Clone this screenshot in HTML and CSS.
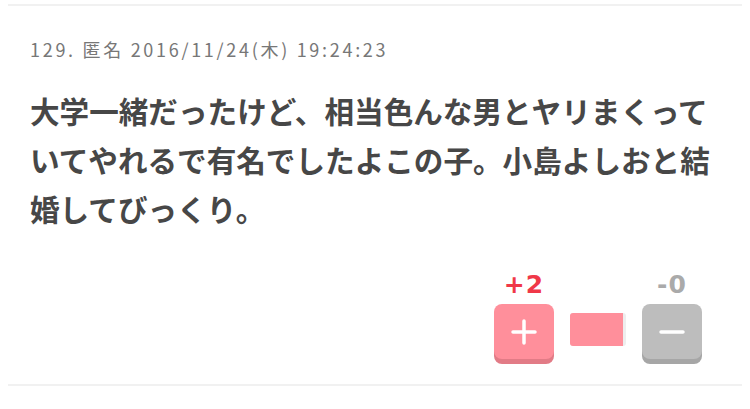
FILE: index.html
```html
<!DOCTYPE html>
<html lang="ja">
<head>
<meta charset="utf-8">
<link rel="stylesheet" href="styles.css">
</head>
<body>
<div class="comment">
  <div class="meta">129. 匿名 2016/11/24(木) 19:24:23</div>
  <div class="body">大学一緒だったけど、相当色んな男とヤリまくっていてやれるで有名でしたよこの子。小島よしおと結婚してびっくり。</div>
  <div class="votes">
    <div class="vote">
      <div class="count plus-count">+2</div>
      <div class="btn plus"><svg width="26" height="26" viewBox="0 0 26 26"><path d="M13 2v22M2 13h22" stroke="#fff" stroke-width="3.5" stroke-linecap="round"/></svg></div>
    </div>
    <div class="bar"><div class="bar-fill"></div></div>
    <div class="vote">
      <div class="count minus-count">-0</div>
      <div class="btn minus"><svg width="26" height="26" viewBox="0 0 26 26"><path d="M2 13h22" stroke="#fff" stroke-width="3.5" stroke-linecap="round"/></svg></div>
    </div>
  </div>
</div>
</body>
</html>
```
FILE: styles.css
```css
html, body { margin: 0; padding: 0; background: #fff; }
body { width: 750px; height: 409px; overflow: hidden; font-family: "Noto Sans CJK JP", "Noto Sans", sans-serif; }
.comment {
  margin: 4px 8px 0 8px;
  width: 734px;
  border-top: 2px solid #f1f1f1;
  border-bottom: 2px solid #f1f1f1;
  box-sizing: border-box;
  height: 382px;
  padding: 30px 0 0 22px;
}
.meta { font-size: 18px; color: #777; line-height: 26px; letter-spacing: 2.7px; }
.body {
  margin-top: 24px;
  width: 700px;
  font-size: 29.6px;
  font-weight: 700;
  letter-spacing: 0;
  line-height: 49px;
  color: #474747;
}
.votes { display: flex; align-items: flex-end; margin-top: 38px; margin-left: 464px; }
.vote { display: flex; flex-direction: column; align-items: center; width: 60px; }
.count { font-family: "DejaVu Sans", sans-serif; font-weight: 700; font-size: 25px; letter-spacing: 1px; line-height: 28px; margin-bottom: 5px; }
.plus-count { color: #f03848; }
.minus-count { color: #aaa; }
.btn { width: 60px; height: 55px; border-radius: 8px; display: flex; align-items: center; justify-content: center; }
.plus { background: #ff8f9b; box-shadow: 0 5px 0 #e27b86; }
.minus { background: #bdbdbd; box-shadow: 0 5px 0 #a6a6a6; }
.bar { width: 56px; height: 33px; margin: 0 16px 13px 16px; background: #eee; border-radius: 3px; overflow: hidden; }
.bar-fill { width: 53px; height: 100%; background: #ff8f9b; }
```
